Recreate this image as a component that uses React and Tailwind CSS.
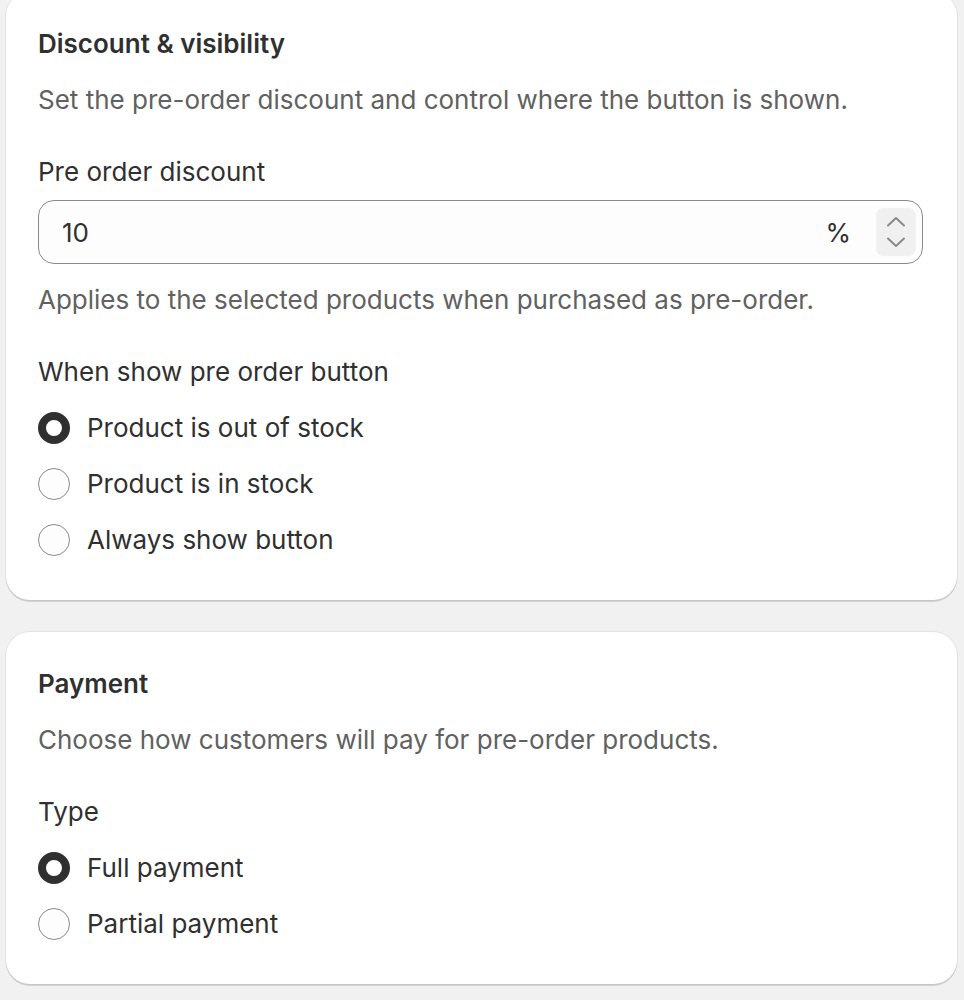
import React from "react";

function Radio({ checked, label }) {
  return (
    <div className="flex items-center gap-[17px] h-[40px]">
      {checked ? (
        <span className="w-[32px] h-[32px] rounded-full border-[8.5px] border-[#303030] bg-white shrink-0" />
      ) : (
        <span className="w-[32px] h-[32px] rounded-full border-[1.5px] border-[#8a8a8a] bg-[#fdfdfd] shrink-0" />
      )}
      <span className="text-[26px] leading-[40px] text-[#303030]">{label}</span>
    </div>
  );
}

function Card({ children }) {
  return (
    <div className="bg-white rounded-[24px] px-[32px] pt-[32px] pb-[40px] shadow-[0_2px_0_0_rgba(0,0,0,0.12),0_0_0_1px_rgba(0,0,0,0.06)]">
      {children}
    </div>
  );
}

export default function App() {
  return (
    <div
      className="min-h-screen bg-[#f1f1f1] px-[6px] pb-[16px]"
      style={{ fontFamily: "Inter, 'Noto Sans', sans-serif" }}
    >
      <div className="flex flex-col gap-[32px] mt-[-8px] w-[951px]">
        <Card>
          <h2 className="text-[26px] leading-[40px] font-semibold text-[#303030]">Discount &amp; visibility</h2>
          <p className="mt-[16px] text-[26px] leading-[40px] text-[#616161]">
            Set the pre-order discount and control where the button is shown.
          </p>
          <div className="mt-[32px] text-[26px] leading-[40px] text-[#303030]">Pre order discount</div>
          <div className="mt-[8px] mr-[2px] h-[64px] rounded-[16px] border-[1.5px] border-[#8a8a8a] bg-[#fdfdfd] flex items-center pl-[23px] pr-[6px]">
            <span className="flex-1 text-[26px] text-[#303030]">10</span>
            <span className="text-[26px] text-[#303030] mr-[25px]">%</span>
            <div className="w-[40px] h-[48px] rounded-[8px] bg-[#f0f0f0] flex flex-col items-center justify-center gap-[10px]">
              <svg width="20" height="11" viewBox="0 0 20 11" fill="none">
                <path d="M2 9.5 L10 2 L18 9.5" stroke="#8a8a8a" strokeWidth="2" strokeLinecap="round" strokeLinejoin="round" />
              </svg>
              <svg width="20" height="11" viewBox="0 0 20 11" fill="none">
                <path d="M2 1.5 L10 9 L18 1.5" stroke="#8a8a8a" strokeWidth="2" strokeLinecap="round" strokeLinejoin="round" />
              </svg>
            </div>
          </div>
          <p className="mt-[16px] text-[26px] leading-[40px] text-[#616161]">
            Applies to the selected products when purchased as pre-order.
          </p>
          <div className="mt-[32px] text-[26px] leading-[40px] text-[#303030]">When show pre order button</div>
          <div className="mt-[16px] flex flex-col gap-[16px]">
            <Radio checked label="Product is out of stock" />
            <Radio label="Product is in stock" />
            <Radio label="Always show button" />
          </div>
        </Card>
        <Card>
          <h2 className="text-[26px] leading-[40px] font-semibold text-[#303030]">Payment</h2>
          <p className="mt-[16px] text-[26px] leading-[40px] text-[#616161]">
            Choose how customers will pay for pre-order products.
          </p>
          <div className="mt-[32px] text-[26px] leading-[40px] text-[#303030]">Type</div>
          <div className="mt-[16px] flex flex-col gap-[16px]">
            <Radio checked label="Full payment" />
            <Radio label="Partial payment" />
          </div>
        </Card>
      </div>
    </div>
  );
}
